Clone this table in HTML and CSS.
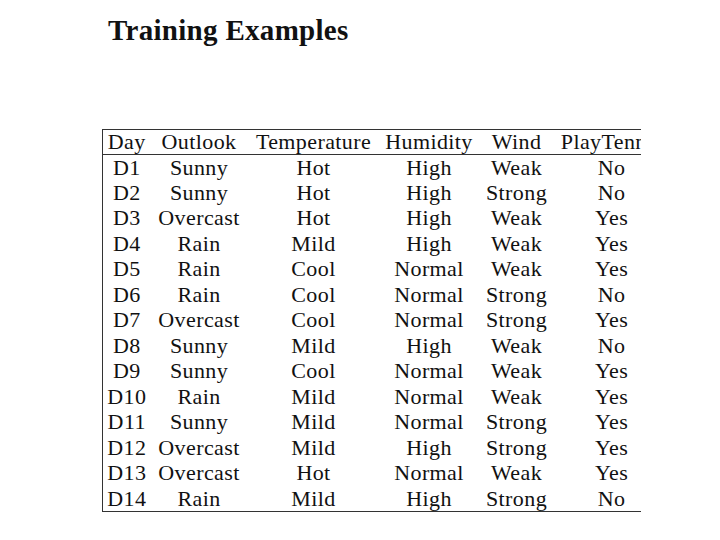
FILE: index.html
```html
<!DOCTYPE html>
<html>
<head>
<meta charset="utf-8">
<link rel="stylesheet" href="styles.css">
</head>
<body>
<h1 class="title">Training Examples</h1>
<div class="clip">
<table class="data">
<colgroup>
<col class="c-day"><col class="c-outlook"><col class="c-temp"><col class="c-hum"><col class="c-wind"><col class="c-play">
</colgroup>
<thead>
<tr><th>Day</th><th>Outlook</th><th>Temperature</th><th>Humidity</th><th>Wind</th><th>PlayTennis</th></tr>
</thead>
<tbody>
<tr><td>D1</td><td>Sunny</td><td>Hot</td><td>High</td><td>Weak</td><td>No</td></tr>
<tr><td>D2</td><td>Sunny</td><td>Hot</td><td>High</td><td>Strong</td><td>No</td></tr>
<tr><td>D3</td><td>Overcast</td><td>Hot</td><td>High</td><td>Weak</td><td>Yes</td></tr>
<tr><td>D4</td><td>Rain</td><td>Mild</td><td>High</td><td>Weak</td><td>Yes</td></tr>
<tr><td>D5</td><td>Rain</td><td>Cool</td><td>Normal</td><td>Weak</td><td>Yes</td></tr>
<tr><td>D6</td><td>Rain</td><td>Cool</td><td>Normal</td><td>Strong</td><td>No</td></tr>
<tr><td>D7</td><td>Overcast</td><td>Cool</td><td>Normal</td><td>Strong</td><td>Yes</td></tr>
<tr><td>D8</td><td>Sunny</td><td>Mild</td><td>High</td><td>Weak</td><td>No</td></tr>
<tr><td>D9</td><td>Sunny</td><td>Cool</td><td>Normal</td><td>Weak</td><td>Yes</td></tr>
<tr><td>D10</td><td>Rain</td><td>Mild</td><td>Normal</td><td>Weak</td><td>Yes</td></tr>
<tr><td>D11</td><td>Sunny</td><td>Mild</td><td>Normal</td><td>Strong</td><td>Yes</td></tr>
<tr><td>D12</td><td>Overcast</td><td>Mild</td><td>High</td><td>Strong</td><td>Yes</td></tr>
<tr><td>D13</td><td>Overcast</td><td>Hot</td><td>Normal</td><td>Weak</td><td>Yes</td></tr>
<tr><td>D14</td><td>Rain</td><td>Mild</td><td>High</td><td>Strong</td><td>No</td></tr>
</tbody>
</table>
</div>
</body>
</html>
```
FILE: styles.css
```css
html, body {
  margin: 0;
  padding: 0;
  background: #fff;
}
body {
  width: 720px;
  height: 540px;
  overflow: hidden;
  font-family: "Liberation Serif", "Times New Roman", serif;
  color: #111;
}
.title {
  margin: 13px 0 0 108px;
  font-size: 29px;
  line-height: 34px;
  font-weight: bold;
  letter-spacing: 0.3px;
}
.clip {
  margin: 82px 0 0 102px;
  width: 539px;
  overflow: hidden;
}
.data {
  border-collapse: collapse;
  table-layout: fixed;
  width: 566px;
  font-size: 22px;
  letter-spacing: 0.4px;
  border-top: 1px solid #333;
  border-left: 1px solid #333;
  border-bottom: 1px solid #333;
}
.c-day { width: 48px; }
.c-outlook { width: 97px; }
.c-temp { width: 132px; }
.c-hum { width: 99px; }
.c-wind { width: 76px; }
.c-play { width: 114px; }
.data th, .data td {
  padding: 0;
  text-align: center;
  font-weight: normal;
  white-space: nowrap;
  line-height: 24px;
}
.data thead tr {
  height: 25px;
  border-bottom: 1px solid #333;
}
.data tbody tr {
  height: 25.5px;
}
```
